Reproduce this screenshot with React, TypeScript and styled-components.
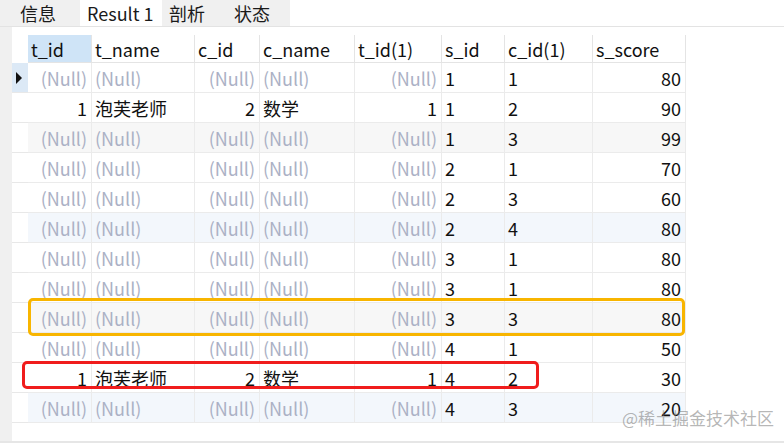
import React from 'react';
import styled, { createGlobalStyle } from 'styled-components';

const GlobalStyle = createGlobalStyle`
	html, body {
		margin: 0;
		padding: 0;
		background: #ffffff;
	}
	body {
		font-family: 'Noto Sans CJK SC', 'Noto Sans', sans-serif;
	}
`;

const COLS = '16px 64px 103px 65px 95px 87px 63px 88px 93px';

type Cell = string | null;

const columns = [
	{ name: 't_id', num: true },
	{ name: 't_name', num: false },
	{ name: 'c_id', num: true },
	{ name: 'c_name', num: false },
	{ name: 't_id(1)', num: true },
	{ name: 's_id', num: false },
	{ name: 'c_id(1)', num: false },
	{ name: 's_score', num: true },
];

const tabs = [
	{ label: '信息', width: 67 },
	{ label: 'Result 1', width: 82, active: true },
	{ label: '剖析', width: 65 },
	{ label: '状态', width: 63 },
];

const T = ['1', '泡芙老师', '2', '数学', '1'];
const N: Cell[] = [null, null, null, null, null];

const rows: Cell[][] = [
	[...N, '1', '1', '80'],
	[...T, '1', '2', '90'],
	[...N, '1', '3', '99'],
	[...N, '2', '1', '70'],
	[...N, '2', '3', '60'],
	[...N, '2', '4', '80'],
	[...N, '3', '1', '80'],
	[...N, '3', '1', '80'],
	[...N, '3', '3', '80'],
	[...N, '4', '1', '50'],
	[...T, '4', '2', '30'],
	[...N, '4', '3', '20'],
];

const rowTone = (i: number) => {
	if (i % 6 === 2) return '#f7f7f7';
	if (i % 6 === 5) return '#f3f7fc';
	return '#ffffff';
};

const App = () => {
	return (
		<Page>
			<GlobalStyle />
			<TabBar>
				{tabs.map((t) => (
					<Tab key={t.label} $width={t.width} $active={t.active}>
						{t.label}
					</Tab>
				))}
			</TabBar>
			<Body>
				<Strip />
				<GridArea>
					<HeaderRow>
						<Indicator $tone="#ffffff" $plain />
						{columns.map((c, i) => (
							<HeadCell key={c.name} $active={i === 0}>
								{c.name}
							</HeadCell>
						))}
					</HeaderRow>
					{rows.map((r, i) => (
						<Row key={i} $tone={rowTone(i)}>
							<Indicator $tone={i === 0 ? '#dce9f6' : '#ffffff'}>
								{i === 0 && <Arrow />}
							</Indicator>
							{r.map((v, j) => (
								<DataCell key={j} $num={columns[j].num} $null={v === null}>
									{v === null ? '(Null)' : v}
								</DataCell>
							))}
						</Row>
					))}
					<OrangeMark />
					<RedMark />
				</GridArea>
				<Watermark>@稀土掘金技术社区</Watermark>
			</Body>
		</Page>
	);
};

export default App;

const Page = styled.div`
	width: 784px;
	height: 443px;
	display: flex;
	flex-direction: column;
	background: #ffffff;
	overflow: hidden;
`;

const TabBar = styled.div`
	height: 27px;
	display: flex;
	align-items: stretch;
	padding-left: 13px;
	background: linear-gradient(90deg, #f0f0f0 0, #f0f0f0 290px, #ffffff 290px);
	border-bottom: 1px solid #e3e3e3;
	box-sizing: border-box;
`;

const Tab = styled.div<{ $width: number; $active?: boolean }>`
	width: ${(p) => p.$width}px;
	display: flex;
	align-items: center;
	padding-left: 7px;
	box-sizing: border-box;
	background: ${(p) => (p.$active ? '#ffffff' : 'transparent')};
	color: #1a1a1a;
	font-size: 18px;
	line-height: 1;
	white-space: nowrap;
`;

const Body = styled.div`
	flex: 1;
	display: flex;
	position: relative;
	border-bottom: 2px solid #e6e6e6;
`;

const Strip = styled.div`
	width: 12px;
	background: #f0f0f0;
`;

const GridArea = styled.div`
	position: relative;
	padding-top: 8px;
	display: flex;
	flex-direction: column;
	align-items: flex-start;
`;

const HeaderRow = styled.div`
	display: grid;
	grid-template-columns: ${COLS};
	height: 28px;
`;

const Row = styled.div<{ $tone: string }>`
	display: grid;
	grid-template-columns: ${COLS};
	height: 30px;
	background: ${(p) => p.$tone};
`;

const Indicator = styled.div<{ $tone: string; $plain?: boolean }>`
	background: ${(p) => p.$tone};
	border-bottom: ${(p) => (p.$plain ? 'none' : '1px solid #e8e8e8')};
	display: flex;
	align-items: center;
	justify-content: center;
	box-sizing: border-box;
`;

const Arrow = styled.div`
	width: 0;
	height: 0;
	border-top: 6px solid transparent;
	border-bottom: 6px solid transparent;
	border-left: 6px solid #111111;
	margin-left: -2px;
`;

const HeadCell = styled.div<{ $active?: boolean }>`
	display: flex;
	align-items: center;
	padding-left: 3px;
	background: ${(p) => (p.$active ? '#cfe4f7' : '#ffffff')};
	border-right: 1px solid #e4e4e4;
	border-bottom: 1px solid #e4e4e4;
	color: #111111;
	font-size: 18px;
	box-sizing: border-box;
	white-space: nowrap;
`;

const DataCell = styled.div<{ $num: boolean; $null: boolean }>`
	display: flex;
	align-items: center;
	justify-content: ${(p) => (p.$num ? 'flex-end' : 'flex-start')};
	padding: 0 4px 0 3px;
	border-right: 1px solid #ebebeb;
	border-bottom: 1px solid #ebebeb;
	color: ${(p) => (p.$null ? '#abb1c5' : '#111111')};
	font-size: 18px;
	box-sizing: border-box;
	white-space: nowrap;
	overflow: hidden;
`;

const OrangeMark = styled.div`
	position: absolute;
	left: 16px;
	top: 271px;
	width: 657px;
	height: 38px;
	border: 3px solid #f8b500;
	border-radius: 5px;
	box-sizing: border-box;
	pointer-events: none;
`;

const RedMark = styled.div`
	position: absolute;
	left: 10px;
	top: 334px;
	width: 517px;
	height: 28px;
	border: 3px solid #f01c1c;
	border-radius: 5px;
	box-sizing: border-box;
	pointer-events: none;
`;

const Watermark = styled.div`
	position: absolute;
	left: 622px;
	top: 378px;
	color: rgba(120, 120, 120, 0.55);
	font-size: 17px;
	white-space: nowrap;
	pointer-events: none;
`;
